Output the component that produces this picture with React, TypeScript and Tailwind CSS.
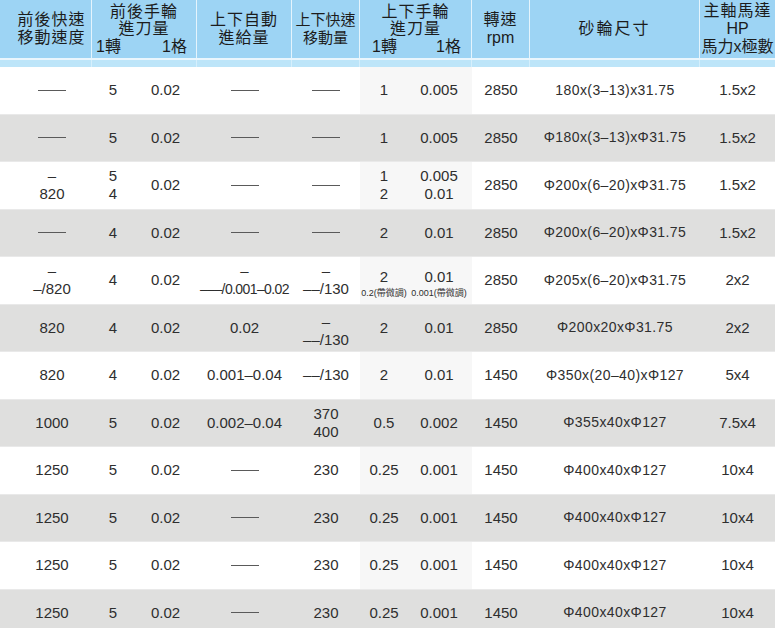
import React from "react";

const COLS = "grid grid-cols-[92px_105px_95px_68px_112px_58px_170px_75px]";
const FONT = { fontFamily: '"Liberation Sans", "Noto Sans CJK TC", sans-serif' };

type Cell = React.ReactNode;

interface Row {
  c1: Cell;
  c2a: Cell;
  c2b: Cell;
  c3: Cell;
  c4: Cell;
  c5a: Cell;
  c5b: Cell;
  rpm: string;
  size: string;
  hp: string;
}

function Dash() {
  return <span className="inline-block w-[28px] h-px bg-[#5a5a5a]" />;
}

function Stack({ top, bottom }: { top: Cell; bottom: Cell }) {
  return (
    <div className="flex flex-col items-center leading-[18px]">
      <span>{top}</span>
      <span>{bottom}</span>
    </div>
  );
}

function Small({ main, note }: { main: Cell; note: string }) {
  return (
    <div className="flex flex-col items-center leading-[20px] pt-[6px]">
      <span>{main}</span>
      <span className="text-[9px] leading-[12px] whitespace-nowrap">{note}</span>
    </div>
  );
}

const last = { c1: "1250", c2a: "5", c2b: "0.02", c3: <Dash />, c4: "230", c5a: "0.25", c5b: "0.001", rpm: "1450", size: "Φ400x40xΦ127", hp: "10x4" };

const rows: Row[] = [
  { c1: <Dash />, c2a: "5", c2b: "0.02", c3: <Dash />, c4: <Dash />, c5a: "1", c5b: "0.005", rpm: "2850", size: "180x(3–13)x31.75", hp: "1.5x2" },
  { c1: <Dash />, c2a: "5", c2b: "0.02", c3: <Dash />, c4: <Dash />, c5a: "1", c5b: "0.005", rpm: "2850", size: "Φ180x(3–13)xΦ31.75", hp: "1.5x2" },
  {
    c1: <Stack top="–" bottom="820" />,
    c2a: <Stack top="5" bottom="4" />,
    c2b: "0.02",
    c3: <Dash />,
    c4: <Dash />,
    c5a: <Stack top="1" bottom="2" />,
    c5b: <Stack top="0.005" bottom="0.01" />,
    rpm: "2850",
    size: "Φ200x(6–20)xΦ31.75",
    hp: "1.5x2",
  },
  { c1: <Dash />, c2a: "4", c2b: "0.02", c3: <Dash />, c4: <Dash />, c5a: "2", c5b: "0.01", rpm: "2850", size: "Φ200x(6–20)xΦ31.75", hp: "1.5x2" },
  {
    c1: <Stack top="–" bottom="–/820" />,
    c2a: "4",
    c2b: "0.02",
    c3: <Stack top="–" bottom={<span className="text-[14px] tracking-[-0.6px]">–––/0.001–0.02</span>} />,
    c4: <Stack top="–" bottom="––/130" />,
    c5a: <Small main="2" note="0.2(帶微調)" />,
    c5b: <Small main="0.01" note="0.001(帶微調)" />,
    rpm: "2850",
    size: "Φ205x(6–20)xΦ31.75",
    hp: "2x2",
  },
  {
    c1: "820",
    c2a: "4",
    c2b: "0.02",
    c3: "0.02",
    c4: <div className="pt-[6px]"><Stack top="–" bottom="––/130" /></div>,
    c5a: "2",
    c5b: "0.01",
    rpm: "2850",
    size: "Φ200x20xΦ31.75",
    hp: "2x2",
  },
  { c1: "820", c2a: "4", c2b: "0.02", c3: "0.001–0.04", c4: "––/130", c5a: "2", c5b: "0.01", rpm: "1450", size: "Φ350x(20–40)xΦ127", hp: "5x4" },
  { c1: "1000", c2a: "5", c2b: "0.02", c3: "0.002–0.04", c4: <Stack top="370" bottom="400" />, c5a: "0.5", c5b: "0.002", rpm: "1450", size: "Φ355x40xΦ127", hp: "7.5x4" },
  last,
  last,
  last,
  last,
];

function HeaderCell({ children, border = true }: { children: React.ReactNode; border?: boolean }) {
  return (
    <div
      className={`flex flex-col items-center justify-center text-center leading-[18px] whitespace-nowrap ${
        border ? "border-r border-[#e4f4fd]" : ""
      }`}
    >
      {children}
    </div>
  );
}

function Header() {
  return (
    <div>
      <div className={`${COLS} h-[58px] bg-[#9dd4f4] text-[16px] text-[#1c1c1c] tracking-[1px]`}>
        <HeaderCell>
          <div className="pl-3">
            <div>前後快速</div>
            <div>移動速度</div>
          </div>
        </HeaderCell>
        <HeaderCell>
          <div>前後手輪</div>
          <div className="-mt-[1px]">進刀量</div>
          <div className="w-full flex justify-between pl-[4px] pr-[9px] tracking-normal">
            <span>1轉</span>
            <span>1格</span>
          </div>
        </HeaderCell>
        <HeaderCell>
          <div>上下自動</div>
          <div>進給量</div>
        </HeaderCell>
        <HeaderCell>
          <div className="text-[15px] tracking-normal">
            <div>上下快速</div>
            <div>移動量</div>
          </div>
        </HeaderCell>
        <HeaderCell>
          <div>上下手輪</div>
          <div className="-mt-[1px]">進刀量</div>
          <div className="w-full flex justify-between pl-[12px] pr-[10px] tracking-normal">
            <span>1轉</span>
            <span>1格</span>
          </div>
        </HeaderCell>
        <HeaderCell>
          <div>轉速</div>
          <div className="tracking-normal">rpm</div>
        </HeaderCell>
        <HeaderCell>
          <div className="tracking-[2px]">砂輪尺寸</div>
        </HeaderCell>
        <HeaderCell border={false}>
          <div>主軸馬達</div>
          <div className="tracking-normal">HP</div>
          <div className="tracking-normal">馬力x極數</div>
        </HeaderCell>
      </div>
      <div className="h-[2px] bg-[#eaf6fd]" />
      <div className={`${COLS} h-[7px] bg-[#bde5f9]`}>
        {Array.from({ length: 8 }).map((_, i) => (
          <div key={i} className={i < 7 ? "border-r border-[#d6effc]" : ""} />
        ))}
      </div>
    </div>
  );
}

function DataRow({ row, gray }: { row: Row; gray: boolean }) {
  const cell = "flex items-center justify-center";
  return (
    <div
      className={`${COLS} h-[47.5px] text-[15px] text-[#2e2e2e] border-b border-[#e9e9e9] ${
        gray ? "bg-[#dfdfde]" : "bg-white"
      }`}
    >
      <div className={`${cell} pl-3`}>{row.c1}</div>
      <div className="flex">
        <div className={`${cell} w-[42px]`}>{row.c2a}</div>
        <div className={`${cell} w-[63px]`}>{row.c2b}</div>
      </div>
      <div className={`${cell} whitespace-nowrap`}>{row.c3}</div>
      <div className={`${cell} whitespace-nowrap`}>{row.c4}</div>
      <div className={`flex ${gray ? "" : "bg-[#f7f7f7]"}`}>
        <div className={`${cell} w-[46px] pl-[2px]`}>{row.c5a}</div>
        <div className={`${cell} w-[66px]`}>{row.c5b}</div>
      </div>
      <div className={cell}>{row.rpm}</div>
      <div className={`${cell} text-[14px] tracking-[0.4px]`}>{row.size}</div>
      <div className={cell}>{row.hp}</div>
    </div>
  );
}

export default function App() {
  return (
    <div className="w-[775px] h-[628px] overflow-hidden bg-white" style={FONT}>
      <Header />
      {rows.map((row, i) => (
        <DataRow key={i} row={row} gray={i % 2 === 1} />
      ))}
    </div>
  );
}
